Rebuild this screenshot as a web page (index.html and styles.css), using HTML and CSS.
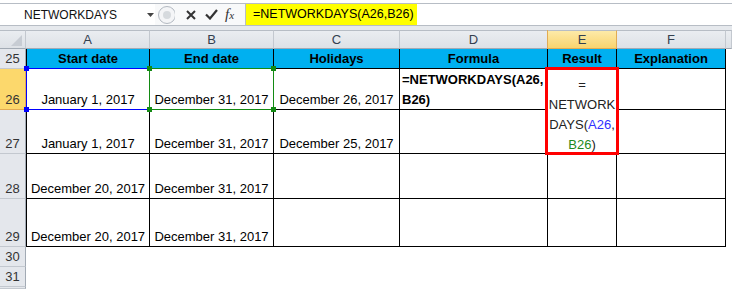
FILE: index.html
```html
<!DOCTYPE html>
<html lang="en">
<head>
    <meta charset="UTF-8">
    <title>NETWORKDAYS</title>
    <link rel="stylesheet" href="styles.css">
</head>
<body>
    <div class="formula-bar">
        <div class="name-box">
            <span>NETWORKDAYS</span>
            <svg class="drop" width="7" height="4" viewBox="0 0 7 4"><polygon points="0,0 7,0 3.5,4" fill="#444"/></svg>
        </div>
        <div class="fx-tools">
            <svg class="grip" width="18" height="20" viewBox="0 0 18 20">
                <circle cx="10" cy="10" r="8.5" fill="#f4f5f7" stroke="#b3b9c1"/>
                <circle cx="10" cy="10" r="4" fill="#d6dade"/>
            </svg>
            <svg class="tool x" width="10" height="10" viewBox="0 0 10 10">
                <path d="M1 1 L9 9 M9 1 L1 9" stroke="#333" stroke-width="2"/>
            </svg>
            <svg class="tool ok" width="13" height="11" viewBox="0 0 13 11">
                <path d="M1 5.5 L5 9.5 L12 1" stroke="#333" stroke-width="2.2" fill="none"/>
            </svg>
            <span class="fx">f<small>x</small></span>
        </div>
        <div class="fx-input"><span class="hl">=NETWORKDAYS(A26,B26)</span></div>
    </div>
    <div class="bar-gap"></div>

    <div class="grid">
        <!-- column letters -->
        <div class="corner">
            <svg width="11" height="11" viewBox="0 0 11 11"><polygon points="11,0 11,11 0,11" fill="#c7ccd3"/></svg>
        </div>
        <div class="col-head">A</div>
        <div class="col-head">B</div>
        <div class="col-head">C</div>
        <div class="col-head">D</div>
        <div class="col-head on">E</div>
        <div class="col-head">F</div>
        <div class="col-head"></div>

        <!-- 25 -->
        <div class="row-head">25</div>
        <div class="c first title">Start date</div>
        <div class="c title">End date</div>
        <div class="c title">Holidays</div>
        <div class="c title">Formula</div>
        <div class="c title">Result</div>
        <div class="c title">Explanation</div>
        <div class="blank"></div>

        <!-- 26 -->
        <div class="row-head on">26</div>
        <div class="c first">January 1, 2017
            <div class="sel blue"><i class="tl"></i><i class="tr"></i><i class="bl"></i><i class="br"></i></div>
        </div>
        <div class="c">December 31, 2017
            <div class="sel green"><i class="tl"></i><i class="tr"></i><i class="bl"></i><i class="br"></i></div>
        </div>
        <div class="c">December 26, 2017</div>
        <div class="c formula">=NETWORKDAYS(A26,<br>B26)</div>
        <div class="c">
            <div class="edit">=<br>NETWORK<br>DAYS(<span class="ref-a">A26</span>,<br><span class="ref-b">B26</span>)</div>
        </div>
        <div class="c"></div>
        <div class="blank"></div>

        <!-- 27 -->
        <div class="row-head">27</div>
        <div class="c first">January 1, 2017</div>
        <div class="c">December 31, 2017</div>
        <div class="c">December 25, 2017</div>
        <div class="c"></div>
        <div class="c"></div>
        <div class="c"></div>
        <div class="blank"></div>

        <!-- 28 -->
        <div class="row-head">28</div>
        <div class="c first">December 20, 2017</div>
        <div class="c">December 31, 2017</div>
        <div class="c"></div>
        <div class="c"></div>
        <div class="c"></div>
        <div class="c"></div>
        <div class="blank"></div>

        <!-- 29 -->
        <div class="row-head">29</div>
        <div class="c first">December 20, 2017</div>
        <div class="c">December 31, 2017</div>
        <div class="c"></div>
        <div class="c"></div>
        <div class="c"></div>
        <div class="c"></div>
        <div class="blank"></div>

        <div class="row-head">30</div>
        <div class="blank wide"></div>
        <div class="row-head">31</div>
        <div class="blank wide"></div>
        <div class="row-head"></div>
        <div class="blank wide"></div>
    </div>
</body>
</html>
```

FILE: styles.css
```css
* {
    box-sizing: border-box;
}
body {
    margin: 0;
    width: 732px;
    height: 289px;
    overflow: hidden;
    background: #fff;
    font-family: "Liberation Sans", Arial, sans-serif;
    color: #000;
}

/* formula bar */
.formula-bar {
    display: flex;
    height: 26px;
    padding-top: 3px;
}
.formula-bar > div {
    height: 23px;
    border-top: 1px solid #b7bdc5;
    border-bottom: 1px solid #b7bdc5;
}
.name-box {
    width: 155px;
    display: flex;
    align-items: center;
    padding-left: 24px;
    padding-right: 1px;
    font-size: 12px;
    color: #111;
}
.name-box .drop {
    margin-left: auto;
}
.fx-tools {
    width: 90px;
    display: flex;
    align-items: center;
    padding-left: 2px;
    background: #f8f9fa;
}
.fx-tools .x {
    margin-left: 11px;
}
.fx-tools .ok {
    margin-left: 9px;
}
.fx {
    margin-left: 7px;
    font-family: "Liberation Serif", serif;
    font-style: italic;
    font-size: 15px;
    color: #333;
}
.fx small {
    font-size: 11px;
}
.fx-input {
    flex: 1;
    border-left: 1px solid #b7bdc5;
    background: #fff;
}
.hl {
    display: inline-block;
    height: 21px;
    line-height: 21px;
    padding: 0 3px 0 7px;
    background: #ffff00;
    font-size: 12.5px;
}
.bar-gap {
    height: 4px;
    background: #e6e9ed;
}

/* sheet grid */
.grid {
    display: grid;
    grid-template-columns: 26px 124px 124px 126px 148px 69px 109px 1fr;
    grid-template-rows: 19px 20px 41px 44px 45px 48px 20px 20px 2px;
    font-size: 13px;
}
.corner,
.col-head {
    background: linear-gradient(#eaedf1, #dde1e6);
    border-top: 1px solid #b7bdc5;
    border-right: 1px solid #c3c8cf;
    border-bottom: 1px solid #a2aab4;
}
.corner {
    display: flex;
    justify-content: flex-end;
    align-items: flex-end;
    padding: 0 3px 2px 0;
}
.col-head {
    display: flex;
    align-items: center;
    justify-content: center;
    color: #34404f;
}
.col-head.on {
    background: linear-gradient(#fdeaa8, #f9d46f);
    border-right-color: #e2ab53;
    border-bottom-color: #e2ab53;
    box-shadow: -1px 0 0 #e2ab53;
}
.row-head {
    display: flex;
    align-items: flex-end;
    justify-content: center;
    padding-bottom: 1px;
    line-height: 17px;
    background: #e4e7ec;
    border-right: 1px solid #a2aab4;
    border-bottom: 1px solid #c3c8cf;
    color: #333;
}
.row-head.on {
    background: #fcd86c;
    border-right-color: #e2ab53;
    border-bottom-color: #e2ab53;
}

.c {
    position: relative;
    display: flex;
    align-items: flex-end;
    justify-content: center;
    padding: 0 2px 1px;
    line-height: 17px;
    white-space: nowrap;
    border-right: 1px solid #000;
    border-bottom: 1px solid #000;
}
.c.first {
    border-left: 1px solid #000;
}
.c.title {
    background: #00b0f0;
    font-weight: bold;
}
.c.formula {
    align-items: flex-start;
    justify-content: flex-start;
    padding: 1px 2px 0;
    line-height: 20px;
    font-weight: bold;
    white-space: normal;
}
.blank.wide {
    grid-column: span 7;
}

/* reference highlights */
.sel {
    position: absolute;
    top: -1px;
    left: -1px;
    right: -1px;
    bottom: -1px;
    border: 1px solid;
    z-index: 1;
}
.sel.blue {
    color: #0000ff;
}
.sel.green {
    color: #138a13;
}
.sel i {
    position: absolute;
    width: 5px;
    height: 5px;
    background: currentColor;
}
.sel .tl { top: -3px; left: -3px; }
.sel .tr { top: -3px; right: -3px; }
.sel .bl { bottom: -3px; left: -3px; }
.sel .br { bottom: -3px; right: -3px; }

.edit {
    position: absolute;
    top: -2px;
    left: -3px;
    width: 74px;
    height: 88px;
    padding-top: 5px;
    border: 3px solid #ff0000;
    background: #fff;
    z-index: 2;
    text-align: center;
    line-height: 20px;
    white-space: normal;
    color: #222;
}
.ref-a {
    color: #3030ff;
}
.ref-b {
    color: #1d8a1d;
}
```
